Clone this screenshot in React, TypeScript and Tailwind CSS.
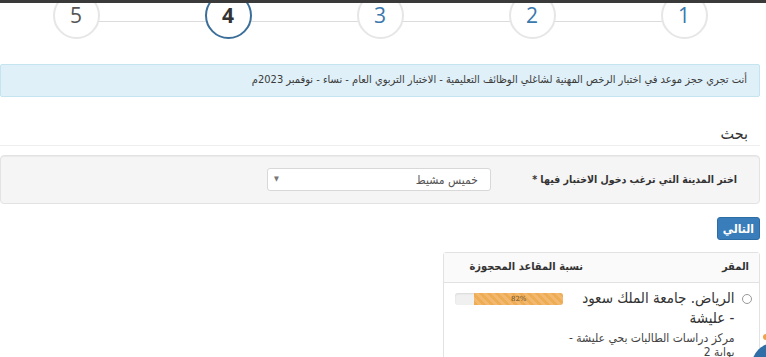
const steps = [
    { n: "1", state: "done" },
    { n: "2", state: "done" },
    { n: "3", state: "done" },
    { n: "4", state: "active" },
    { n: "5", state: "todo" },
]

export default function App() {
    return (
        <div className="relative w-[766px] h-[357px] overflow-hidden bg-white font-['DejaVu_Sans_Condensed','DejaVu_Sans',sans-serif] text-[#333]">
            {/* top dark strip */}
            <div className="absolute top-0 left-0 right-0 h-[3px] bg-[#3a3a3a] z-20" />

            <div dir="rtl" className="w-[760px]">
                {/* wizard steps */}
                <div className="relative flex -mt-[8px]">
                    <div className="absolute top-[29px] left-[76px] right-[76px] h-px bg-[#dcdcdc]" />
                    {steps.map((s) => (
                        <div key={s.n} className="w-[152px] flex justify-center">
                            <div
                                className={
                                    s.state === "active"
                                        ? "relative z-10 w-[47px] h-[47px] rounded-full bg-white border-2 border-[#3b6f99] flex items-center justify-center font-['Open_Sans',sans-serif] text-[21px] font-bold text-[#333]"
                                        : s.state === "done"
                                        ? "relative z-10 w-[47px] h-[47px] rounded-full bg-white border-2 border-[#e6e6e6] flex items-center justify-center font-['Open_Sans',sans-serif] text-[21px] text-[#3a78ad]"
                                        : "relative z-10 w-[47px] h-[47px] rounded-full bg-white border-2 border-[#e6e6e6] flex items-center justify-center font-['Open_Sans',sans-serif] text-[21px] text-[#555]"
                                }
                            >
                                {s.n}
                            </div>
                        </div>
                    ))}
                </div>

                {/* info alert */}
                <div className="mt-[25px] h-[33px] flex items-center px-[12px] bg-[#dff0f8] border border-[#c4e5f0] rounded-[2px] text-[11px] text-[#3a3a3a] whitespace-nowrap">
                    أنت تجري حجز موعد في اختبار الرخص المهنية لشاغلي الوظائف التعليمية - الاختبار التربوي العام - نساء - نوفمبر 2023م
                </div>

                {/* search heading */}
                <div className="mt-[27px] pr-[12px] pb-[1px] border-b border-[#eeeeee] text-[16px] leading-[20px] text-[#333]">
                    بحث
                </div>

                {/* search panel */}
                <div className="mt-[9px] h-[49px] flex items-center bg-[#f5f5f5] border border-[#e3e3e3] rounded-[4px] shadow-[inset_0_1px_1px_rgba(0,0,0,0.05)] pr-[22px]">
                    <div className="w-[196px] whitespace-nowrap text-[10.5px] font-bold text-[#333]">
                        اختر المدينة التي ترغب دخول الاختبار فيها *
                    </div>
                    <div className="mr-[50px] w-[224px] h-[23px] flex items-center justify-between bg-white border border-[#d8d8d8] rounded-[3px] px-[12px] text-[12px] text-[#555]">
                        <span>خميس مشيط</span>
                        <span className="text-[7px] text-[#777] -ml-[6px]">▼</span>
                    </div>
                </div>

                {/* next button */}
                <div className="mt-[13px] flex">
                    <button className="h-[23px] px-[5px] rounded-[3px] bg-[#3a7dbb] border border-[#2e6da4] text-white text-[12px] font-bold leading-none">
                        التالي
                    </button>
                </div>

                {/* centers table */}
                <div className="mt-[12px] w-[317px] border border-[#e2e2e2] rounded-t-[3px]">
                    <div className="h-[30px] flex items-center bg-[#fafafa] border-b border-[#e2e2e2] text-[11px] font-bold text-[#333]">
                        <div className="w-[176px] pr-[10px]">المقر</div>
                        <div className="flex-1">نسبة المقاعد المحجوزة</div>
                    </div>
                    <div className="flex pt-[5px] pb-[10px]">
                        <div className="w-[190px] flex">
                            <div className="w-[28px] flex justify-center pt-[6px]">
                                <div className="w-[10px] h-[10px] rounded-full border border-[#999] bg-white" />
                            </div>
                            <div className="flex-1">
                                <div className="text-[15px] leading-[20px] text-[#333] whitespace-nowrap">
                                    الرياض. جامعة الملك سعود
                                    <br />- عليشة
                                </div>
                                <div className="mt-[3px] text-[12px] leading-[14px] text-[#444] whitespace-nowrap">
                                    مركز دراسات الطالبات بحي عليشة -
                                    <br />
                                    بوابة 2
                                </div>
                            </div>
                        </div>
                        <div className="flex-1 pr-[6px] pt-[5px]">
                            <div className="w-[108px] h-[12px] bg-[#f0f0f0] rounded-[3px] overflow-hidden flex shadow-[inset_0_1px_2px_rgba(0,0,0,0.1)]">
                                <div
                                    className="h-full bg-[#eeac55] flex items-center justify-center text-[7px] text-[#6b4a1e] font-['DejaVu_Serif',serif] bg-[linear-gradient(45deg,rgba(255,255,255,0.15)_25%,transparent_25%,transparent_50%,rgba(255,255,255,0.15)_50%,rgba(255,255,255,0.15)_75%,transparent_75%,transparent)] bg-[length:8px_8px]"
                                    style={{ width: "82%" }}
                                >
                                    82%
                                </div>
                            </div>
                        </div>
                    </div>
                </div>
            </div>

            {/* floating widget at corner */}
            <div className="absolute left-[752px] top-[343px] w-[44px] h-[44px] rounded-full bg-[#2f6ea6]" />
            <div className="absolute left-[763px] top-[334px] w-[6px] h-[6px] rounded-full bg-[#f0a24a]" />
        </div>
    )
}
